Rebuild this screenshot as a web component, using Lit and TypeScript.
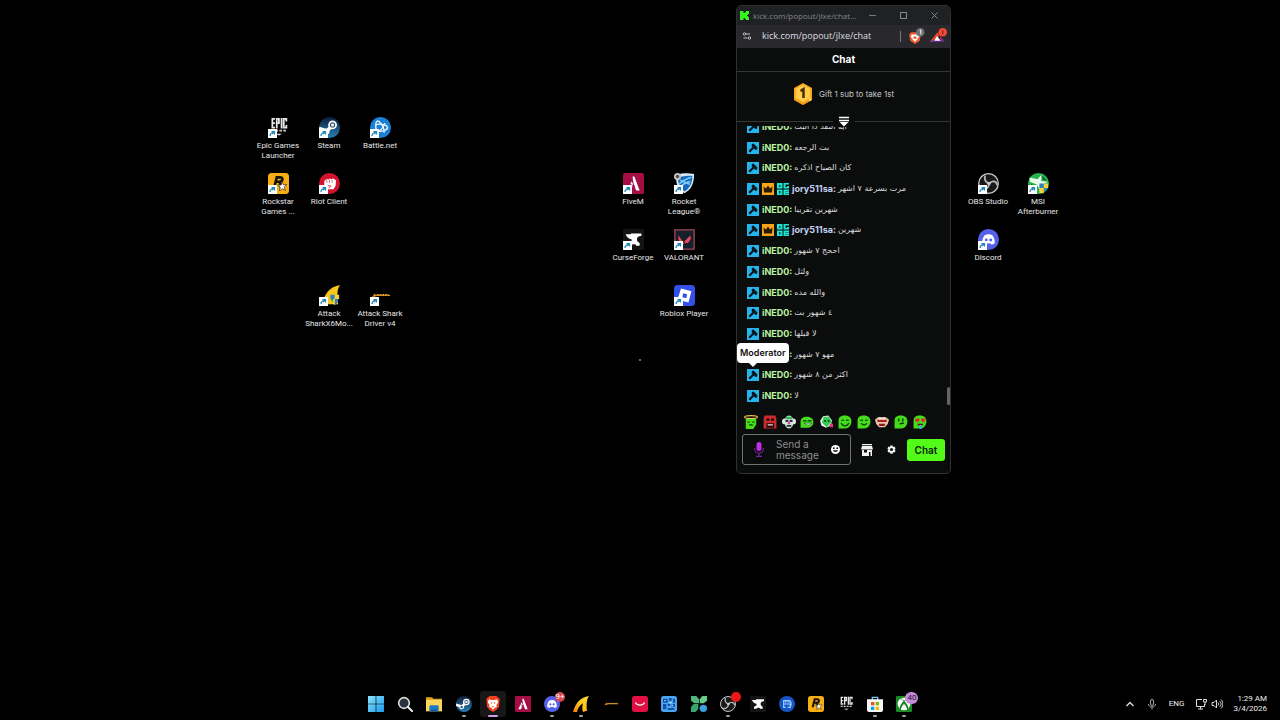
import { LitElement, html, svg, css, nothing } from "lit";
import { customElement, property } from "lit/decorators.js";
import { styleMap } from "lit/directives/style-map.js";

type Art = ReturnType<typeof svg>;

const anvil = svg`<path fill="#fff" d="M3 6h6v-1h12v3c-4 0-5 2-5 4 0 2 1 3 3 4v3h-4c0-2-5-2-5 0H6v-3c3-1 4-2 4-4C6 11 4 9 3 6z"/>`;

const art: Record<string, Art> = {
  epic: svg`<rect x="3" y="0" width="18" height="21" rx="1" fill="#050505"/>
    <g fill="none" stroke="#e8e8e8" stroke-width="2"><path d="M8 2H5v10h3M5 7h3M10 13V2h2.500v5H10M15.500 1v12M21 5V2h-3v10h3V9"/></g>
    <path d="M4 15.500h3M8.500 15.500h3M13 15.500h3M17.500 15.500h3" stroke="#ccc" stroke-width="2"/><path d="M9 19h7l-3.500 2z" fill="#ddd"/>`,
  steam: svg`<defs><linearGradient id="stm" x1="0" y1="0" x2="0" y2="1"><stop offset="0" stop-color="#101d3a"/><stop offset="1" stop-color="#2880b4"/></linearGradient></defs>
    <circle cx="12" cy="12" r="12" fill="url(#stm)"/><path d="M0 13l9 3 6-6" stroke="#fff" stroke-width="4" fill="none"/>
    <circle cx="15.500" cy="9" r="5" fill="#fff"/><circle cx="15.500" cy="9" r="3" fill="#1b4066"/><circle cx="15.500" cy="9" r="2" fill="#dfe8ef"/><circle cx="8.500" cy="16.500" r="3.500" fill="#fff"/><circle cx="8.500" cy="16.500" r="1.800" fill="#1f5b8a"/>`,
  battle: svg`<circle cx="12" cy="12" r="12" fill="#1c80d6"/><g fill="none" stroke="#eaf6ff" stroke-width="1.500">
    <path d="M8 18C5 9 7 3 10 5c4 3 7 9 6 13"/><path d="M6 9c7-2 14 0 14 3s-6 5-12 4"/><path d="M6 17c5 0 9-4 11-10"/></g>`,
  rockstar: svg`<rect width="24" height="24" rx="4" fill="#f7ae12"/><path fill="none" stroke="#16120a" stroke-width="3" d="M7 17l3-12h4c4 0 3 5-1 5H9m4 0c2 1 0 4 1.500 6"/>
    <path fill="#fff" stroke="#33270c" stroke-width=".8" d="M16 10l1.500 3.500 4-.3-3 2.800 1.500 4-3.500-2-3.500 2.300 1-4-3-2.500h4z"/>`,
  riot: svg`<circle cx="12" cy="12" r="12" fill="#d3122f"/><path fill="#fff" d="M6 9l2.500-2h2l.5 1 .5-1.500h2l.5 1 1-1h2l2.500 2-.5 6-2.500 4H9l-3-4z"/><path d="M9 8v3M12 8v3M15 8v3M9 14l5 1-3 2" stroke="#d3122f" stroke-width=".8" fill="none"/>`,
  shark: svg`<defs><linearGradient id="shk" x1="0" y1="1" x2="1" y2="0"><stop offset="0" stop-color="#ff7a10"/><stop offset=".5" stop-color="#ffc418"/><stop offset="1" stop-color="#ffe23a"/></linearGradient></defs>
    <path fill="url(#shk)" d="M0 24C4 10 11 2 24 0c-4 5-4 14-3 22l-6 2c-2-4-1-9 0-13-5 3-8 8-9 13z"/>`,
  sharkShield: svg`<path fill="#f7c61c" d="M3 24C6 10 12 2 24 0c-4 6-3 13-2 22H9z"/><path fill="#2f7fc4" d="M13 11h5v5h-5zM18 16h4c0 4-2 6-4 7z"/><path fill="#f4d33a" d="M18 11h5v5h-5zM13 16h5v7c-3-2-5-4-5-7z"/><path fill="#35a35b" d="M13 16h3v4z"/>`,
  wire: svg`<path fill="#d98a18" d="M2 14l3-4 2 1h16v1.500H8L6 13z"/><path d="M8 11h13" stroke="#ffd26a" stroke-width="1" stroke-dasharray="2 1"/>`,
  fivem: svg`<rect width="24" height="24" rx="2" fill="#a50d45"/><path fill="#fff" d="M11 4h2l6 16h-4L11.500 10zM10 9l1.500 4L9 20H5z"/><path d="M8 13l5 2M9 9l3 1" stroke="#a50d45"/>`,
  rocket: svg`<path fill="#d8e8f6" d="M3 2c7-2 13-2 20-1 0 12-4 18-11 22C5 19 1 12 3 2z"/><path fill="#1769c0" d="M5 5c6-2 10-2 16-2 0 9-3 14-9 18C7 16 4 12 5 5z"/><path d="M6 13c3-5 8-6 14-8M8 16c3-4 7-6 11-6M7 8c3 2 8 3 11 5" stroke="#7ed0f8" stroke-width="1.700" fill="none"/><circle cx="4" cy="4" r="4" fill="#c9c5c0"/><circle cx="4" cy="4" r="2" fill="#5b4b45"/>`,
  curse: svg`<rect width="24" height="24" rx="2" fill="#141414"/>${anvil}`,
  valorant: svg`<rect x="1" y="1" width="22" height="22" fill="#16202c" stroke="#a04554" stroke-width="1.500"/><path fill="#e8475a" d="M5 7l7 10H8.500L5 12zM19 7v5l-3 4h-3.500l-1-1.500z"/>`,
  roblox: svg`<rect width="24" height="24" rx="4" fill="#3350e8"/><path fill="#fff" fill-rule="evenodd" d="M8 4l12 3-3.500 13L4 16.500zM10.500 9.500l-1 4.500 4.500 1 1-4.500z"/>`,
  obs: svg`<circle cx="12" cy="12" r="11.200" fill="#191919" stroke="#c9c9c9" stroke-width="1.500"/><g fill="none" stroke="#b8b8b8" stroke-width="2"><path d="M8 3c-1 5 1 8 5 9M13 12c3-4 8-3 9 2M13 12c-1 6-5 8-10 6"/></g><circle cx="12.500" cy="12" r="2" fill="#ccc"/>`,
  msi: svg`<circle cx="12" cy="12" r="12" fill="#24b64b"/><path fill="#e9f9ec" d="M2 5l9 2 5-6-1 8 8 1-7 3-2 7-4-7-8-3z"/><path fill="#155f2d" d="M15 2l7 7-5-1zM3 12l6 4-3 5z"/><path fill="#2f7fc4" d="M13 12h5v5h-5zM18 17h4l-3 5h-1z"/><path fill="#f4d33a" d="M18 12h5v5h-5zM13 17h5v6h-5z"/>`,
  discord: svg`<circle cx="12" cy="12" r="12" fill="#5661ea"/><path fill="#fff" d="M7.500 7c3-1.300 6-1.300 9 0 2 3 3 6 2.600 9.500L15.500 18l-1-1.500h-5l-1 1.500-3.600-1.500C4.500 13 5.500 10 7.500 7z"/><circle cx="9.500" cy="12.500" r="1.700" fill="#5661ea"/><circle cx="14.500" cy="12.500" r="1.700" fill="#5661ea"/>`,
  windows: svg`<defs><linearGradient id="win" x1="0" y1="0" x2="1" y2="1"><stop offset="0" stop-color="#8be4ff"/><stop offset="1" stop-color="#199be8"/></linearGradient></defs><path fill="url(#win)" d="M0 0h11.500v11.500H0zM12.500 0H24v11.500H12.500zM0 12.500h11.500V24H0zM12.500 12.500H24V24H12.500z"/>`,
  search: svg`<circle cx="10.500" cy="10.500" r="8" fill="#29323a" stroke="#dadada" stroke-width="2.500"/><path d="M16.500 16.500l6 6" stroke="#eee" stroke-width="3" stroke-linecap="round"/>`,
  folder: svg`<path fill="#e2a51b" d="M0 2h9l2 2h13v6H0z"/><path fill="#fbd55c" d="M0 6h24v17H0z"/><path fill="#1e79c2" d="M5 23v-7a2 2 0 012-2h10a2 2 0 012 2v7z"/><path fill="#155c9c" d="M8 20h8v3H8z"/>`,
  brave: svg`<path fill="#f4401e" d="M7 0h10l5 4-1 12-4 5-5 3-5-3-4-5L2 4z"/><path fill="#fff" d="M6 5l4 1h4l4-1 2 4-3 5 1 2-4 2-2 3-2-3-4-2 1-2-3-5z"/><path fill="#f4401e" d="M8 9l3 1-1 2zM16 9l-3 1 1 2zM10 15h4l-2 2z"/>`,
  smile: svg`<rect width="24" height="24" rx="4" fill="#e20f42"/><path d="M5 10c3 5 11 5 14 0" fill="none" stroke="#fff" stroke-width="2"/>`,
  panel: svg`<rect width="24" height="24" rx="4" fill="#49a6ef"/><path fill="#1550a8" d="M3 4h7v6H3zM12 3h4v4h-4zM18 4h3v6h-3zM3 12h5v8H3zM10 12h4v3h-4zM16 12h5v4h-5zM10 18h10v3H10z"/><path fill="#bce9ff" d="M5 6h2v2H5zM13 9h3v2h-3zM16 13h2v2h-2z"/>`,
  clover: svg`<path fill="#4fb77c" d="M0 0h8l4 5v6H5L0 7z"/><path fill="#66cc88" d="M24 0h-7l-4 5v6h6l5-4z"/><path fill="#39a46b" d="M0 24v-8l4-4h7v7l-4 5z"/><circle cx="18.500" cy="18.500" r="5.500" fill="#3b9fe4"/>`,
  bsg: svg`<circle cx="12" cy="12" r="12" fill="#1555c7"/><path d="M17 7H7v10h3M7 12h10v5h-4M10 10V7M13 9h5v6" fill="none" stroke="#9fd0ff" stroke-width="1.700"/>`,
  store: svg`<path d="M8 6V2h8v4" fill="none" stroke="#7cc7ee" stroke-width="2"/><path fill="#f6f6f6" d="M0 5h24v16a3 3 0 01-3 3H3a3 3 0 01-3-3z"/><path fill="#f25022" d="M6 9h5v5H6z"/><path fill="#7fba00" d="M13 9h5v5h-5z"/><path fill="#00a4ef" d="M6 16h5v5H6z"/><path fill="#ffb900" d="M13 16h5v5h-5z"/>`,
  xbox: svg`<rect width="24" height="24" rx="2" fill="#1a8a25"/><circle cx="12" cy="12" r="9.500" fill="#fff"/><path fill="#1a8a25" d="M5 4c3-1 5 1 7 3 2-2 4-4 7-3l-2 1c-2 0-3 1-4 3 3 3 6 8 6 12l-2 1c-1-4-3-7-5-9-2 2-4 5-5 9l-2-1c0-4 3-9 6-12-1-2-2-3-4-3z"/>`,
};

const pic = (name: string, cls: string) =>
  html`<svg class=${cls} viewBox="0 0 24 24" aria-hidden="true">${art[name]}</svg>`;

interface Shortcut { icon: string; label: string; x: number; y: number }

const shortcuts: Shortcut[] = [
  { icon: "epic", label: "Epic Games Launcher", x: 278, y: 117 },
  { icon: "steam", label: "Steam", x: 329, y: 117 },
  { icon: "battle", label: "Battle.net", x: 380, y: 117 },
  { icon: "rockstar", label: "Rockstar Games ...", x: 278, y: 173 },
  { icon: "riot", label: "Riot Client", x: 329, y: 173 },
  { icon: "sharkShield", label: "Attack SharkX6Mo...", x: 329, y: 285 },
  { icon: "wire", label: "Attack Shark Driver v4", x: 380, y: 285 },
  { icon: "fivem", label: "FiveM", x: 633, y: 173 },
  { icon: "rocket", label: "Rocket League®", x: 684, y: 173 },
  { icon: "curse", label: "CurseForge", x: 633, y: 229 },
  { icon: "valorant", label: "VALORANT", x: 684, y: 229 },
  { icon: "roblox", label: "Roblox Player", x: 684, y: 285 },
  { icon: "obs", label: "OBS Studio", x: 988, y: 173 },
  { icon: "msi", label: "MSI Afterburner", x: 1038, y: 173 },
  { icon: "discord", label: "Discord", x: 988, y: 229 },
];

@customElement("desktop-shortcut")
class DesktopShortcut extends LitElement {
  @property() icon = "";
  @property() label = "";
  static styles = css`
    :host { display: block; }
    .link { display: flex; flex-direction: column; align-items: center; gap: 3px; width: 50px; color: #e6e6e6; text-decoration: none; text-align: center; }
    .frame { display: grid; width: 21px; height: 21px; }
    .art, .arrow { grid-area: 1 / 1; }
    .art { width: 21px; height: 21px; }
    .arrow { width: 9px; height: 9px; align-self: end; background: #fff; }
    .text { font: 8px/10px Roboto, sans-serif; }
  `;
  render() {
    return html`<a class="link" href="#">
      <span class="frame">
        ${pic(this.icon, "art")}
        <svg class="arrow" viewBox="0 0 9 9" aria-hidden="true"><path d="M2 7c0-2 1-3 3-3.500M3.500 2.500h3v3M6.500 2.500L4 5" fill="none" stroke="#2384b8" stroke-width="1.200"/></svg>
      </span>
      <span class="text">${this.label}</span>
    </a>`;
  }
}

const hammer = html`<svg class="badge" viewBox="0 0 24 24" role="img" aria-label="Moderator badge"><rect width="24" height="24" fill="#25b5ec"/><path fill="#06151c" d="M10 4l3-1 8 8-1 4-3 1-3-3-8 8-3-3 8-8-2-2z"/></svg>`;
const crown = html`<svg class="badge" viewBox="0 0 24 24" role="img" aria-label="VIP badge"><rect width="24" height="24" fill="#f9a51b"/><path fill="#2a1a03" d="M3 7l5 4 4-6 4 6 5-4-1 12H4z"/></svg>`;
const og = html`<svg class="badge" viewBox="0 0 24 24" role="img" aria-label="OG badge"><path fill="#1ce5d4" d="M0 0h11v11H0zM13 0h11v3h-7v5h3V6h4v5H13zM0 13h11v11H0zM13 13h11v11H13z"/><path fill="#074a4a" d="M4 4h3v4H4zM4 16h3v5H4z"/><path fill="#0c9a94" d="M16 16h8v2h-8zM16 20h8v2h-8z"/></svg>`;

interface Message { text: string; vip?: boolean }

const messages: Message[] = [
  { text: "ايه النقد ذا البث" },
  { text: "بث الرجعه" },
  { text: "كان الصباح اذكره" },
  { text: "مرت بسرعة ٧ اشهر", vip: true },
  { text: "شهرين تقريبا" },
  { text: "شهرين", vip: true },
  { text: "اححج ٧ شهور" },
  { text: "ولثل" },
  { text: "والله مده" },
  { text: "٤ شهور بث" },
  { text: "لا قبلها" },
  { text: "مهو ٧ شهور" },
  { text: "اكثر من ٨ شهور" },
  { text: "لا" },
];

const blob = svg`<path fill="#45dc1c" d="M1 9c0-5 4-8 11-8s11 4 11 10-4 12-11 12H1z"/>`;
const eyes = svg`<path d="M6 10c1-2 3-2 4 0M14 10c1-2 3-2 4 0" fill="none" stroke="#0b3a08" stroke-width="2"/>`;
const emotes: { name: string; draw: Art }[] = [
  { name: "angel", draw: svg`<path fill="#45dc1c" d="M3 6h18v10l-5 8H3z"/><path d="M6 12h4M14 12h4M9 17h6" stroke="#0b3a08" stroke-width="2"/><ellipse cx="12" cy="3.500" rx="11" ry="2.500" fill="none" stroke="#f4c04a" stroke-width="2"/>` },
  { name: "rage", draw: svg`<path fill="#c92c2c" d="M3 1h18l2 4v18H1V5z"/><path fill="#230606" d="M6 6h5v4H6zM14 6h5v4h-5zM6 14h13v8H6z"/><path d="M8 17h9" stroke="#f3dede" stroke-width="2"/>` },
  { name: "clown", draw: svg`<circle cx="5" cy="11" r="5" fill="#e9e3ef"/><circle cx="19" cy="11" r="5" fill="#e9e3ef"/><ellipse cx="12" cy="12" rx="8" ry="11" fill="#c3eed0"/><path fill="#2db34c" d="M7 3h10v4H7z"/><path fill="#43204e" d="M6 8h5v4H6zM13 8h5v4h-5zM8 17h8v3H8z"/><circle cx="12" cy="14" r="2" fill="#e33690"/>` },
  { name: "smirk", draw: svg`<path fill="#45dc1c" d="M1 11c0-5 4-8 11-8s11 4 11 9-4 10-11 10H1z"/><path d="M5 10h6M13 10h7" stroke="#0b3a08" stroke-width="2"/><path d="M7 14h13c-2 4-9 4-13 0z" fill="#fff" stroke="#0b3a08"/>` },
  { name: "clap", draw: svg`<path fill="#e8f1ec" d="M2 10l5-8 9-1 6 8-1 9-9 4-8-4z"/><path fill="#35cb50" d="M8 3h9l5 9-9 9-8-8z"/><path d="M9 10h3M15 10h3" stroke="#093b12" stroke-width="3"/><path fill="#e23484" d="M18 15h6v6h-5z"/>` },
  { name: "happy", draw: svg`${blob}${eyes}<path d="M5 14c4 6 10 6 14 0" fill="none" stroke="#0b3a08" stroke-width="2"/>` },
  { name: "joy", draw: svg`${blob}${eyes}<path d="M7 14c3 4 7 4 10 0" fill="none" stroke="#0b3a08" stroke-width="2"/>` },
  { name: "hot", draw: svg`<path fill="#edc5ae" d="M0 8l5-4h14l5 4-2 7-5 6H7l-5-6z"/><path fill="#a9211e" d="M4 8h16v4H4z"/><path fill="#f4e5ce" d="M7 4h4v4H7zM13 4h4v4h-4z"/><path fill="#8b1b20" d="M7 15h10v4H7z"/>` },
  { name: "think", draw: svg`${blob}<path d="M8 6v5M15 6v5M10 16c3-3 5-1 7-2" fill="none" stroke="#0b3a08" stroke-width="2.500"/>` },
  { name: "love", draw: svg`${blob}<path fill="#e3252d" d="M4 6h7v4l-3.500 3L4 10zM14 6h7v4l-3.500 3L14 10z"/><path fill="#5b1d10" d="M8 15h9v3H8z"/><path fill="#41a9ee" d="M11 17h4v7h-4z"/>` },
];

@customElement("chat-window")
class ChatWindow extends LitElement {
  static styles = css`
    :host { display: flex; flex-direction: column; box-sizing: border-box; width: 215px; border: 1px solid #303030; border-radius: 5px; overflow: hidden; background: #0b0c0c; color: #e8e8e8; font: 9px/12px Inter, sans-serif; }
    button { border: 0; padding: 0; background: none; color: inherit; font: inherit; display: grid; place-items: center; }
    .title { display: flex; align-items: center; height: 19px; padding-left: 3px; background: #202124; color: #85868a; }
    .kick { width: 9px; height: 9px; margin-right: 4px; flex: none; }
    .caption { flex: 1; min-width: 0; white-space: nowrap; font: 8px/12px "Open Sans", sans-serif; }
    .ctl { width: 31px; height: 19px; flex: none; }
    .ctl svg { width: 9px; height: 9px; }
    .address { display: flex; align-items: center; height: 23px; padding: 0 3px 1px 5px; box-sizing: border-box; background: #29292d; }
    .tune { width: 10px; height: 10px; margin-right: 10px; }
    .url { flex: 1; min-width: 0; height: 14px; padding: 0; border: 0; background: none; color: #dedee0; font: 9px/14px "Open Sans", sans-serif; }
    .divider { width: 1px; height: 11px; margin-right: 6px; background: #77777b; }
    .ext { width: 17px; height: 17px; margin-right: 6px; overflow: visible; }
    .ext:last-child { margin-right: 0; }
    .heading { margin: 0; height: 23px; border-bottom: 1px solid #353637; font: 700 10px/22px Inter, sans-serif; color: #fff; text-align: center; }
    .gift { display: flex; align-items: center; justify-content: center; gap: 6px; height: 50px; padding-bottom: 6px; box-sizing: border-box; border-bottom: 1px solid #353637; color: #c9caca; font: 8px/12px Inter, sans-serif; }
    .medal { width: 20px; height: 22px; }
    .toggle { align-self: center; width: 22px; height: 11px; margin: -6px 0 -1px; background: #0b0c0c; z-index: 1; }
    .toggle svg { width: 12px; height: 11px; }
    .scroller { position: relative; height: 284px; overflow: hidden; }
    .list { box-sizing: border-box; height: 289px; margin: -9px 0 0; padding: 0 10px; list-style: none; display: flex; flex-direction: column; justify-content: space-between; }
    .row { display: flex; align-items: center; gap: 2px; height: 20px; white-space: nowrap; }
    .badge { width: 12px; height: 12px; flex: none; margin-right: 1px; }
    .name { font-weight: 700; color: #b9f3a2; }
    .name.vip { color: #c3d1f2; }
    .said { font: 8px/12px "DejaVu Sans", sans-serif; color: #dcdcdc; }
    .tip { position: absolute; left: 0; top: 217px; padding: 4px 3px; border-radius: 4px; background: #fff; color: #111; font: 600 9px/12px Inter, sans-serif; }
    .tip::after { content: ""; position: absolute; left: 12px; top: 100%; border: 4px solid transparent; border-top-color: #fff; border-bottom: 0; }
    .thumb { position: absolute; right: 0; bottom: 5px; width: 3px; height: 18px; border-radius: 2px; background: #646464; }
    .emotes { display: flex; justify-content: space-between; padding: 5px 23px 5px 7px; }
    .emotes svg { display: block; width: 14px; height: 14px; }
    .compose { display: flex; align-items: center; padding: 0 5px 8px 5px; }
    .box { flex: 1; min-width: 0; display: flex; align-items: center; box-sizing: border-box; height: 31px; padding: 0 9px 0 10px; border: 1px solid #747474; border-radius: 3px; }
    .mic { width: 12px; height: 15px; margin-right: 11px; }
    .field { flex: 1; min-width: 0; width: 0; height: 22px; padding: 0; border: 0; outline: 0; resize: none; overflow: hidden; background: none; color: #fff; font: 10px/11px Inter, sans-serif; }
    .field::placeholder { color: #8e8f91; }
    .face { width: 11px; height: 11px; }
    .tool { width: 24px; height: 24px; }
    .tool svg { width: 12px; height: 12px; }
    .tool.shop { margin-left: 4px; }
    .tool.gear svg { width: 9px; height: 9px; }
    .send { width: 38px; height: 22px; margin-left: 4px; border-radius: 3px; background: #53fc18; color: #0b1a06; font: 600 10px/12px Inter, sans-serif; }
  `;
  render() {
    return html`
      <div class="title">
        <svg class="kick" viewBox="0 0 9 9" aria-hidden="true"><path fill="#35f51d" d="M0 0h3.500v2H5V1h1V0h3v3H8v1H7v1h1v1h1v3H6V8H5V7H3.500v2H0z"/></svg>
        <span class="caption">kick.com/popout/jlxe/chat...</span>
        <button class="ctl" aria-label="Minimize"><svg viewBox="0 0 9 9"><path d="M1 4.500h7" stroke="#77787b"/></svg></button>
        <button class="ctl" aria-label="Maximize"><svg viewBox="0 0 9 9"><rect x="1.500" y="1.500" width="6" height="6" fill="none" stroke="#85868a"/></svg></button>
        <button class="ctl" aria-label="Close"><svg viewBox="0 0 9 9"><path d="M1.500 1.500l6 6M7.500 1.500l-6 6" stroke="#85868a"/></svg></button>
      </div>
      <div class="address">
        <svg class="tune" viewBox="0 0 10 10" aria-hidden="true"><g fill="none" stroke="#c6c6ca"><circle cx="2.500" cy="3" r="1.200"/><path d="M4 3h4M1.500 7h4"/><circle cx="7.500" cy="7" r="1.200"/></g></svg>
        <input class="url" aria-label="Address" .value=${"kick.com/popout/jlxe/chat"} />
        <span class="divider"></span>
        <svg class="ext" viewBox="0 0 16 16" aria-label="Shields" role="img"><path fill="#f2592f" d="M4 4h7l2 2-1 6-4.500 3L3 12 2 6z"/><path fill="#fff" d="M4.500 6h6l1 2-2 3-2 2-2-2-2-3z"/><path fill="#f2592f" d="M6 8h3v2H6z"/><circle cx="12.500" cy="4" r="4" fill="#6c7078"/><path d="M12 2.500l1-.5v4" stroke="#eee" fill="none"/></svg>
        <svg class="ext" viewBox="0 0 16 16" aria-label="Rewards" role="img"><path fill="#f0442c" d="M7 4l2 3-6 6H0z"/><path fill="#6b2fae" d="M0 13l3-2h7l4 2z"/><path fill="#b32376" d="M9 7l5 6-4-2z"/><path fill="#fff" d="M6.500 7.500L10 12H4z"/><circle cx="12" cy="4" r="4" fill="#f34a38"/><path d="M12 2v4" stroke="#7d1d16"/></svg>
      </div>
      <h1 class="heading">Chat</h1>
      <div class="gift">
        <svg class="medal" viewBox="0 0 20 22" aria-hidden="true"><path fill="#f5a91d" d="M10 0l9 5v12l-9 5-9-5V5z"/><path fill="#ffcb4b" d="M10 2l7 4v9l-7 4-7-4V6z"/><path fill="#e48a14" d="M1 16l9 5 9-5v1l-9 5-9-5z"/><path d="M7.500 8L10.500 6v9" fill="none" stroke="#4c2d06" stroke-width="2.500"/><path fill="#fff4c6" d="M16 17l1-2 1 2-1 1z"/></svg>
        <span>Gift 1 sub to take 1st</span>
      </div>
      <button class="toggle" aria-label="Expand"><svg viewBox="0 0 12 11"><path d="M1 1.500h10M1 4.500h10" stroke="#fff" stroke-width="1.500"/><path fill="#fff" d="M1.500 6h9L6 10.500z"/></svg></button>
      <div class="scroller">
        <ul class="list">
          ${messages.map((m) => html`<li class="row">${hammer}${m.vip ? html`${crown}${og}` : nothing}<span class="name ${m.vip ? "vip" : ""}">${m.vip ? "jory511sa:" : "iNED0:"}</span><span class="said" dir="rtl" lang="ar">${m.text}</span></li>`)}
        </ul>
        <div class="tip" role="tooltip">Moderator</div>
        <span class="thumb"></span>
      </div>
      <div class="emotes">
        ${emotes.map((e) => html`<button aria-label=${e.name}><svg viewBox="0 0 24 24">${e.draw}</svg></button>`)}
      </div>
      <div class="compose">
        <div class="box">
          <svg class="mic" viewBox="0 0 12 15" aria-hidden="true"><rect x="3.500" y="0" width="5" height="9" rx="2.500" fill="#ba31e2"/><path d="M1.500 6c0 7 9 7 9 0M6 11v3M3 14.300h6" fill="none" stroke="#7d1d9f" stroke-width="1.200"/></svg>
          <textarea class="field" aria-label="Message" placeholder="Send a message"></textarea>
          <button aria-label="Emotes"><svg class="face" viewBox="0 0 11 11"><circle cx="5.500" cy="5.500" r="4.500" fill="#fff"/><circle cx="3.800" cy="4.200" r=".9" fill="#111"/><circle cx="7.200" cy="4.200" r=".9" fill="#111"/><path fill="#111" d="M3 6.300h5c-.5 2.300-4.500 2.300-5 0z"/></svg></button>
        </div>
        <button class="tool shop" aria-label="Store"><svg viewBox="0 0 12 12"><path fill="#f2f2f2" d="M1 0h10v1.300H1zM1 2h10l1 3.500H0zM1 6h2v2.500h3V6h5v6H9.500V8H8v4H1z"/></svg></button>
        <button class="tool gear" aria-label="Settings"><svg viewBox="0 0 24 24"><path fill="#f2f2f2" fill-rule="evenodd" d="M9 1h6l1 4 4-1 3 5-3 3 3 3-3 5-4-1-1 4H9l-1-4-4 1-3-5 3-3-3-3 3-5 4 1zM12 8a4 4 0 100 8 4 4 0 000-8z"/></svg></button>
        <button class="send">Chat</button>
      </div>`;
  }
}

interface Task { icon: string; label: string; open?: boolean; active?: boolean; badge?: string; tone?: string }

const tasks: Task[] = [
  { icon: "windows", label: "Start" },
  { icon: "search", label: "Search" },
  { icon: "folder", label: "File Explorer" },
  { icon: "steam", label: "Steam", open: true },
  { icon: "brave", label: "Brave", active: true },
  { icon: "fivem", label: "FiveM" },
  { icon: "discord", label: "Discord", open: true, badge: "9+", tone: "red" },
  { icon: "shark", label: "Attack Shark", open: true },
  { icon: "wire", label: "Attack Shark Driver" },
  { icon: "smile", label: "Smile" },
  { icon: "panel", label: "Control panel" },
  { icon: "clover", label: "Clover" },
  { icon: "obs", label: "OBS Studio", open: true, badge: "", tone: "dot" },
  { icon: "curse", label: "CurseForge" },
  { icon: "bsg", label: "Launcher" },
  { icon: "rockstar", label: "Rockstar Games" },
  { icon: "epic", label: "Epic Games" },
  { icon: "store", label: "Microsoft Store", open: true },
  { icon: "xbox", label: "Xbox", open: true, badge: "40", tone: "lilac" },
];

@customElement("task-bar")
class TaskBar extends LitElement {
  static styles = css`
    :host { display: grid; grid-template-columns: 1fr 558px 1fr; align-items: center; height: 32px; color: #eee; font: 8px/10px Roboto, sans-serif; }
    button { border: 0; padding: 0; background: none; color: inherit; font: inherit; }
    .tasks { grid-column: 2; display: flex; }
    .slot { flex: 1; display: flex; justify-content: center; }
    .task { position: relative; display: grid; place-items: center; width: 26px; height: 26px; border-radius: 3px; }
    .task.active { background: #171717; }
    .art { width: 16px; height: 16px; }
    .task.open::after, .task.active::after { content: ""; position: absolute; bottom: 0; width: 4px; height: 2px; border-radius: 1px; background: #a0a0a0; }
    .task.active::after { width: 10px; background: #d59be8; }
    .count { position: absolute; right: 0; top: 1px; min-width: 10px; height: 10px; border-radius: 6px; text-align: center; }
    .red { background: #d94a50; color: #fff; }
    .dot { right: 0; background: #ee1616; }
    .lilac { min-width: 13px; height: 12px; line-height: 12px; right: -1px; background: #c58bd9; color: #26102e; }
    .tray { display: flex; align-items: center; justify-content: flex-end; padding-right: 13px; }
    .tray svg { display: block; width: 12px; height: 12px; fill: none; stroke: #ddd; }
    .up { margin-right: 10px; }
    .voice { margin-right: 11px; }
    .lang { margin-right: 11px; }
    .net { display: flex; gap: 4px; margin-right: 10px; }
    .clock { text-align: right; }
  `;
  render() {
    return html`
      <div class="tasks">
        ${tasks.map((t) => html`<div class="slot"><button class="task ${t.open ? "open" : ""} ${t.active ? "active" : ""}" aria-label=${t.label}>
          ${pic(t.icon, "art")}${t.tone ? html`<span class="count ${t.tone}">${t.badge}</span>` : nothing}
        </button></div>`)}
      </div>
      <div class="tray">
        <button class="up" aria-label="Hidden icons"><svg viewBox="0 0 12 12"><path stroke-width="1.400" d="M2.500 8L6 4.500 9.500 8"/></svg></button>
        <button class="voice" aria-label="Microphone"><svg viewBox="0 0 12 12"><rect x="4.500" y="1.500" width="3" height="6" rx="1.500" stroke="#aaa"/><path stroke="#aaa" d="M2.500 6c0 4 7 4 7 0M6 9v2.500"/></svg></button>
        <button class="lang">ENG</button>
        <button class="net" aria-label="Network and volume">
          <svg viewBox="0 0 12 12"><path d="M7 1.500H1.500v7h8V6M3 11h5M5.500 8.500V11M8.500 1.500h3v2.500h-3zM10 4v3"/></svg>
          <svg viewBox="0 0 12 12"><path d="M1 4.500h2L5.500 2v8L3 7.500H1zM7 4.500c1 1 1 2 0 3M8.500 3c2 2 2 4 0 6M10 1.500c2.500 3 2.500 6 0 9"/></svg>
        </button>
        <div class="clock"><div>1:29 AM</div><div>3/4/2026</div></div>
      </div>`;
  }
}

@customElement("app-root")
class AppRoot extends LitElement {
  static styles = css`
    :host { display: flex; flex-direction: column; height: 100vh; overflow: hidden; background: #000; }
    .desk { position: relative; flex: 1; }
    .item { position: absolute; margin-left: -25px; }
    .window { position: absolute; left: 736px; top: 5px; }
    .speck { position: absolute; left: 639px; top: 359px; width: 2px; height: 2px; border-radius: 1px; background: #888; }
  `;
  render() {
    return html`
      <main class="desk">
        ${shortcuts.map((s) => html`<desktop-shortcut class="item" style=${styleMap({ left: `${s.x}px`, top: `${s.y}px` })} .icon=${s.icon} .label=${s.label}></desktop-shortcut>`)}
        <chat-window class="window"></chat-window>
        <span class="speck"></span>
      </main>
      <task-bar></task-bar>`;
  }
}
